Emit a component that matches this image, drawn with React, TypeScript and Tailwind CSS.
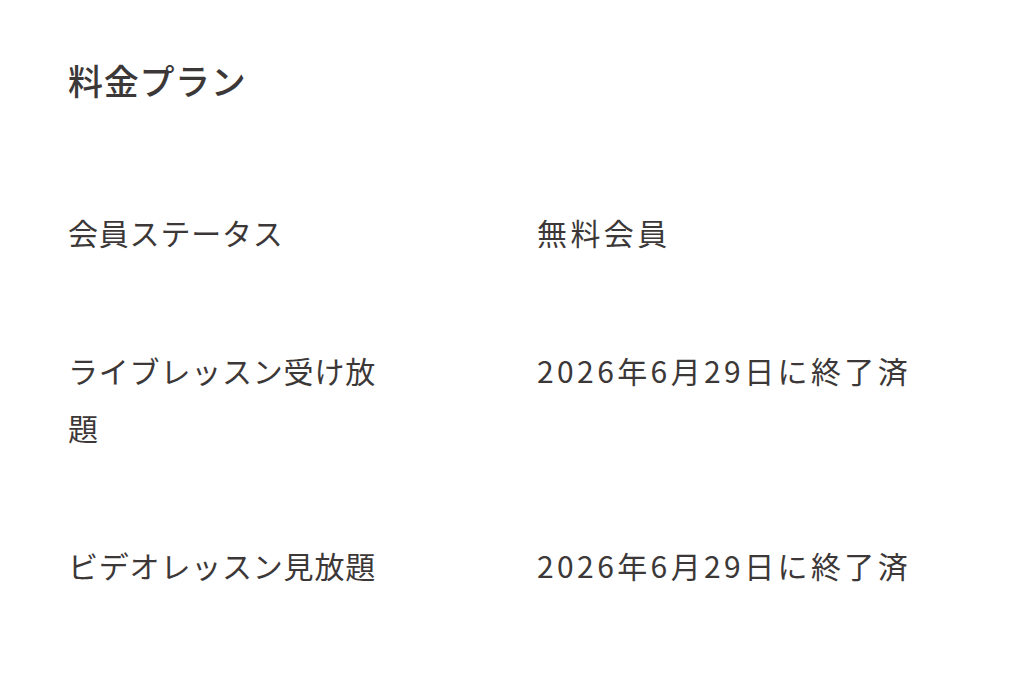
const rows = [
  { label: '会員ステータス', value: '無料会員' },
  { label: 'ライブレッスン受け放題', value: '2026年6月29日に終了済' },
  { label: 'ビデオレッスン見放題', value: '2026年6月29日に終了済' },
]

export default function App() {
  return (
    <div
      className="min-h-[683px] w-full bg-white px-[68px] pt-[56px] text-[#3d3838]"
      style={{ fontFamily: '"Noto Sans CJK JP", "Noto Sans", sans-serif' }}
    >
      <h1 className="text-[35px] leading-[48px] font-medium tracking-[0.02em]">料金プラン</h1>

      <dl className="mt-[100px] flex flex-col gap-[81px] text-[30px] leading-[57px]">
        {rows.map((row) => (
          <div key={row.label} className="grid grid-cols-[320px_1fr] gap-x-[149px]">
            <dt className="tracking-[0.8px]">{row.label}</dt>
            <dd className="tracking-[3.4px]">{row.value}</dd>
          </div>
        ))}
      </dl>
    </div>
  )
}
